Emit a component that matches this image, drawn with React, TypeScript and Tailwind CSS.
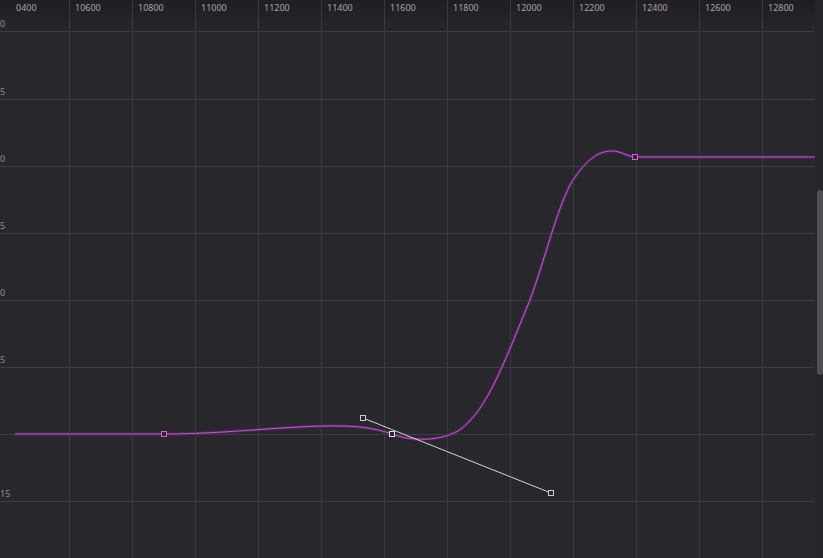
import React from 'react';

const GRID_X = Array.from({ length: 12 }, (_, i) => 69 + i * 63);
const GRID_Y = [31, 99, 166, 233, 300, 367, 434, 501];

const TIME_LABELS = [
  { x: 16, t: '0400' },
  ...GRID_X.slice(0, 12).map((x, i) => ({ x: x + 6, t: String(10600 + i * 200) })),
];

const VALUE_LABELS = [
  { y: 27, t: '0' },
  { y: 95, t: '5' },
  { y: 162, t: '0' },
  { y: 229, t: '5' },
  { y: 296, t: '0' },
  { y: 363, t: '5' },
  { y: 497, t: '15' },
];

const CURVE =
  'M15,434 L164,434 C230,434 290,425 340,426 C365,426 380,430 392,434 ' +
  'C410,441 438,442 458,431 C488,412 508,352 530,300 C548,250 555,215 570,185 ' +
  'C585,160 598,151 612,151 C622,151 628,157 635,157 L815,157';

const Key: React.FC<{ x: number; y: number; color: string }> = ({ x, y, color }) => (
  <rect x={x - 2.5} y={y - 2.5} width={5} height={5} fill="#2a2930" stroke={color} strokeWidth={1} />
);

/**
 * Curve editor graph: time ruler on top, value ruler on the left,
 * one animated spline with keyframes and a selected bezier handle.
 */
const App: React.FC = () => {
  return (
    <div className="flex w-[823px] h-[558px] overflow-hidden bg-[#28272c] font-['Noto_Sans',sans-serif]">
      <div className="relative flex-1 bg-gradient-to-b from-[#1f1e23] via-[#28272c] via-[6%] to-[#28272c]">
        <svg width="815" height="558" viewBox="0 0 815 558" className="block">
          {GRID_X.map((x) => (
            <line key={x} x1={x + 0.5} y1={0} x2={x + 0.5} y2={558} stroke="#3b3a40" strokeWidth={1} />
          ))}
          {GRID_Y.map((y) => (
            <line key={y} x1={0} y1={y + 0.5} x2={815} y2={y + 0.5} stroke="#3d3c42" strokeWidth={1} />
          ))}

          {TIME_LABELS.map((l) => (
            <text key={l.t} x={l.x} y={11} fontSize={9} fill="#a3a3aa">
              {l.t}
            </text>
          ))}
          {VALUE_LABELS.map((l, i) => (
            <text key={i} x={0} y={l.y} fontSize={9} fill="#8e8e95">
              {l.t}
            </text>
          ))}

          {/* spline: soft glow + thin line */}
          <path d={CURVE} fill="none" stroke="#53245c" strokeWidth={3} strokeLinejoin="round" />
          <path d={CURVE} fill="none" stroke="#cf5adf" strokeWidth={0.9} strokeLinejoin="round" />

          {/* tangent handle */}
          <line x1={363} y1={418} x2={551} y2={493} stroke="#d4d4d4" strokeWidth={1} />
          <Key x={164} y={434} color="#d45ce2" />
          <Key x={635} y={157} color="#d45ce2" />
          <Key x={392} y={434} color="#e0e0e0" />
          <Key x={363} y={418} color="#c9c9c9" />
          <Key x={551} y={493} color="#c9c9c9" />
        </svg>
      </div>

      {/* vertical scrollbar */}
      <div className="w-[8px] h-full bg-[#26252a] pt-[190px] pl-[2px]">
        <div className="w-[6px] h-[185px] rounded-[3px] bg-[#4e4e54]" />
      </div>
    </div>
  );
};

export default App;
